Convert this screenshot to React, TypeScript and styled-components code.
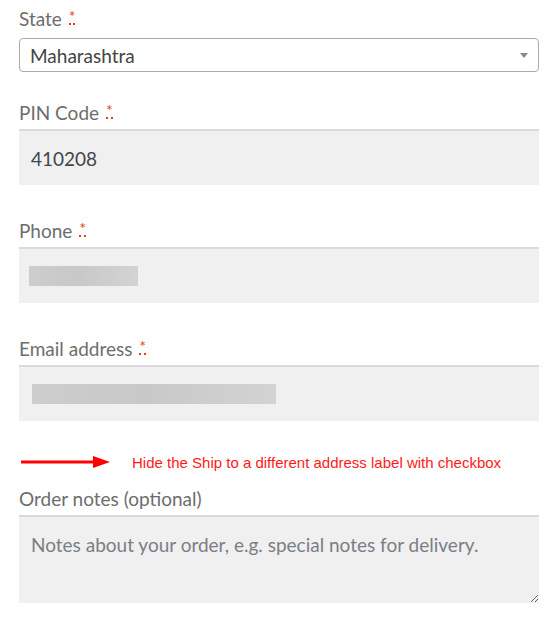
import styled, { createGlobalStyle } from "styled-components";

const GlobalStyle = createGlobalStyle`
    body {
        margin: 0;
        background: #ffffff;
        font-family: "Source Sans Pro", Lato, "Noto Sans", sans-serif;
    }
`;

const Form = styled.form`
    width: 520px;
    padding: 7px 0 0 19px;
    display: flex;
    flex-direction: column;
`;

const Row = styled.div<{ $gap?: number }>`
    display: flex;
    flex-direction: column;
    margin-bottom: ${(p) => p.$gap ?? 34}px;
`;

const Label = styled.label`
    font-size: 19px;
    line-height: 24px;
    color: #6d6d6d;
    margin-bottom: 4px;
`;

const Required = styled.abbr`
    color: #e2401c;
    font-size: 16px;
    text-decoration: none;
    border-bottom: 2px dotted #e2401c;
    margin-left: 2px;
    line-height: 12px;
    display: inline-block;
    vertical-align: top;
    margin-top: 3px;
    padding-bottom: 1px;
`;

const Select = styled.div`
    position: relative;
    height: 34px;
    box-sizing: border-box;
    border: 1px solid #aaaaaa;
    border-radius: 4px;
    display: flex;
    align-items: center;
    padding: 0 10px;
    font-size: 19px;
    color: #444444;
    margin-top: 3px;

    &::after {
        content: "";
        position: absolute;
        right: 10px;
        top: 14px;
        border-left: 4px solid transparent;
        border-right: 4px solid transparent;
        border-top: 5px solid #888888;
    }
`;

const Input = styled.div`
    box-sizing: border-box;
    height: 56px;
    background: #f0f0f0;
    border-top: 2px solid #dadada;
    padding: 0 12px;
    display: flex;
    align-items: center;
    font-size: 19px;
    color: #43454b;
`;

const Notes = styled.textarea`
    box-sizing: border-box;
    display: block;
    height: 88px;
    width: 100%;
    background: #f0f0f0;
    border: none;
    border-top: 2px solid #dadada;
    padding: 16px 12px;
    font-family: inherit;
    font-size: 19px;
    color: #43454b;
    resize: vertical;
    outline: none;

    &::placeholder {
        color: #7a7e86;
    }
`;

const Redact = styled.span<{ $w: number; $shift?: number }>`
    display: block;
    width: ${(p) => p.$w}px;
    height: 20px;
    margin: 0 0 0 ${(p) => p.$shift ?? 0}px;
    background: linear-gradient(90deg, #cdcdcd 0%, #c8c8c8 45%, #d3d3d3 100%);
`;

const Note = styled.div`
    display: flex;
    align-items: center;
    gap: 21px;
    height: 14px;
    margin: 34px 0 18px 2px;
    font-family: "Liberation Sans", Arial, sans-serif;
    font-size: 15px;
    color: #ff1a1a;
`;

function Arrow() {
    return (
        <svg width="90" height="14" viewBox="0 0 90 14">
            <line x1="1" y1="7" x2="74" y2="7" stroke="#ff0000" strokeWidth="3" strokeLinecap="round" />
            <polygon points="72,1 89,7 72,13" fill="#ff0000" />
        </svg>
    );
}

function Star() {
    return <Required title="required">*</Required>;
}

export default function App() {
    return (
        <>
            <GlobalStyle />
            <Form>
                <Row $gap={29}>
                    <Label>State <Star /></Label>
                    <Select>Maharashtra</Select>
                </Row>
                <Row>
                    <Label>PIN Code <Star /></Label>
                    <Input>410208</Input>
                </Row>
                <Row>
                    <Label>Phone <Star /></Label>
                    <Input>
                        <Redact $w={109} $shift={-2} />
                    </Input>
                </Row>
                <Row $gap={0}>
                    <Label>Email address <Star /></Label>
                    <Input>
                        <Redact $w={244} $shift={1} />
                    </Input>
                </Row>
                <Note>
                    <Arrow />
                    <span>Hide the Ship to a different address label with checkbox</span>
                </Note>
                <Row $gap={0}>
                    <Label>Order notes (optional)</Label>
                    <Notes placeholder="Notes about your order, e.g. special notes for delivery." />
                </Row>
            </Form>
        </>
    );
}
